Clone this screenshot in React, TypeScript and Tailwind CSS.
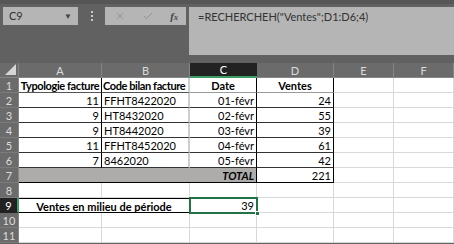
import { X, Check } from 'lucide-react';

// grille : en-tête de ligne + colonnes A..F
const cols = ['A', 'B', 'C', 'D', 'E', 'F'];

const rows = [
  { n: 2, a: '11', b: 'FFHT8422020', c: '01-févr', d: '24' },
  { n: 3, a: '9', b: 'HT8432020', c: '02-févr', d: '55' },
  { n: 4, a: '9', b: 'HT8442020', c: '03-févr', d: '39' },
  { n: 5, a: '11', b: 'FFHT8452020', c: '04-févr', d: '61' },
  { n: 6, a: '7', b: '8462020', c: '05-févr', d: '42' },
];

const RowNum = ({ n, active }: { n: number; active?: boolean }) => (
  <div
    className={`h-[15px] flex items-center justify-center text-[11px] border-b ${
      active
        ? 'bg-[#222222] text-white border-b-[#222222] border-r-2 border-r-[#3d9c63]'
        : 'bg-[#6b6b6b] text-[#dcdcdc] border-b-[#7b7b7b] border-r border-r-[#858585]'
    }`}
  >
    {n}
  </div>
);

const Empty = () => <div className="h-[15px] bg-white border-r border-b border-[#d9d9d9]" />;

export default function App() {
  return (
    <div className="w-[454px] h-[244px] overflow-hidden bg-[#616161] font-['Lato','Liberation_Sans',sans-serif] text-black">
      {/* BARRE DE FORMULE */}
      <div className="h-[63px] border-t-4 border-[#565656] flex items-start pt-[3px] pl-[3px] gap-[3px]">
        <div className="w-[75px] h-[18px] bg-[#b5b5b5] flex items-center justify-between px-[6px] text-[11px] text-[#333]">
          <span>C9</span>
          <span className="text-[8px] text-[#444]">▼</span>
        </div>
        <div className="w-[21px] h-[18px] flex flex-col items-center justify-center gap-[2px]">
          <span className="w-[2px] h-[2px] bg-[#c8c8c8]" />
          <span className="w-[2px] h-[2px] bg-[#c8c8c8]" />
          <span className="w-[2px] h-[2px] bg-[#c8c8c8]" />
        </div>
        <div className="w-[81px] h-[18px] bg-[#b5b5b5] flex items-center justify-between pl-[9px] pr-[8px] text-[#8a8a8a]">
          <X className="w-[12px] h-[12px]" strokeWidth={1.5} />
          <Check className="w-[12px] h-[12px]" strokeWidth={1.5} />
          <span className="font-['Liberation_Serif',serif] italic font-bold text-[11px] text-[#444]">
            f<span className="text-[8px]">x</span>
          </span>
        </div>
        <div className="w-[265px] h-[48px] bg-[#b5b5b5] pl-[9px] pt-[3px] text-[11px] text-[#333] leading-[14px]">
          =RECHERCHEH("Ventes";D1:D6;4)
        </div>
      </div>

      {/* FEUILLE */}
      <div className="grid grid-cols-[19px_83px_88px_67px_77px_60px_60px] text-[11px] leading-[15px]">
        {/* en-têtes de colonnes */}
        <div className="h-[15px] bg-[#6b6b6b] border-r border-[#858585] border-b border-b-[#858585] relative">
          <div className="absolute right-[2px] bottom-[2px] w-0 h-0 border-l-[11px] border-l-transparent border-b-[11px] border-b-[#d6d6d6]" />
        </div>
        {cols.map((c) =>
          c === 'C' ? (
            <div key={c} className="h-[15px] bg-[#222222] text-white text-center border-b-2 border-[#3d9c63] leading-[13px]">
              {c}
            </div>
          ) : (
            <div key={c} className="h-[15px] bg-[#6b6b6b] text-[#dcdcdc] text-center border-r border-b border-[#858585]">
              {c}
            </div>
          )
        )}

        {/* ligne 1 */}
        <RowNum n={1} />
        <div className="h-[15px] bg-white font-bold text-center tracking-[-0.4px] border-r border-r-black border-b border-b-[#555] whitespace-nowrap overflow-hidden">Typologie facture</div>
        <div className="h-[15px] bg-white font-bold pl-[1px] tracking-[-0.4px] border-r-2 border-r-[#cfcfcf] border-b border-b-[#555] whitespace-nowrap overflow-hidden">Code bilan facture</div>
        <div className="h-[15px] bg-white font-bold text-center border-r border-r-black border-b border-b-[#9a9a9a]">Date</div>
        <div className="h-[15px] bg-white font-bold text-center border-r border-r-black border-b border-b-[#9a9a9a]">Ventes</div>
        <Empty />
        <Empty />

        {/* lignes 2 à 6 */}
        {rows.map((r) => (
          <div key={r.n} className="contents">
            <RowNum n={r.n} />
            <div className="h-[15px] bg-white text-right pr-[2px] border-r border-r-black border-b border-b-[#333]">{r.a}</div>
            <div className="h-[15px] bg-white pl-[2px] border-r-2 border-r-[#cfcfcf] border-b border-b-[#333]">{r.b}</div>
            <div className="h-[15px] bg-white text-right pr-[2px] border-r border-r-black border-b border-b-[#333]">{r.c}</div>
            <div className="h-[15px] bg-white text-right pr-[2px] border-r border-r-black border-b border-b-[#333]">{r.d}</div>
            <Empty />
            <Empty />
          </div>
        ))}

        {/* ligne 7 : total */}
        <RowNum n={7} />
        <div className="col-span-3 h-[15px] bg-[#aeabab] text-right pr-[2px] font-bold italic border-r border-r-black border-b border-b-black">TOTAL</div>
        <div className="h-[15px] bg-white text-right pr-[2px] border-r border-r-black border-b border-b-black">221</div>
        <Empty />
        <Empty />

        {/* ligne 8 */}
        <RowNum n={8} />
        {cols.map((c) => (
          <Empty key={c} />
        ))}

        {/* ligne 9 */}
        <RowNum n={9} active />
        <div className="col-span-2 h-[15px] bg-white font-bold text-center border-t border-r border-b border-black">Ventes en milieu de période</div>
        <div className="h-[15px] bg-white relative">
          <div className="absolute -left-px -top-px right-[-1px] bottom-[-1px] border-2 border-[#217346] text-right pr-[2px] leading-[13px]">39</div>
          <div className="absolute right-[-3px] bottom-[-3px] w-[5px] h-[5px] bg-[#217346] border border-white" />
        </div>
        <Empty />
        <Empty />
        <Empty />

        {/* lignes 10, 11 */}
        {[10, 11].map((n) => (
          <div key={n} className="contents">
            <RowNum n={n} />
            {cols.map((c) => (
              <Empty key={c} />
            ))}
          </div>
        ))}
      </div>
    </div>
  );
}
